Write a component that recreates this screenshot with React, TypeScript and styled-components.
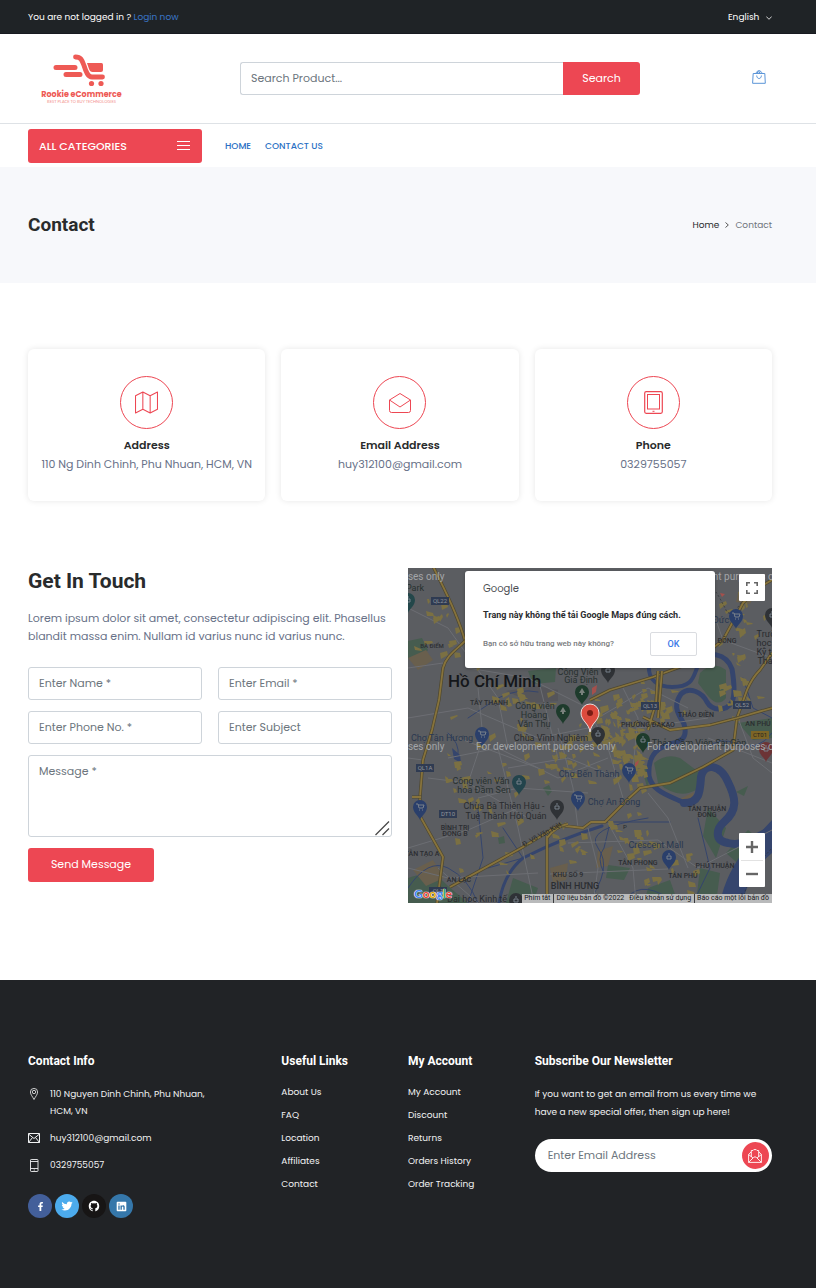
import React from "react";
import styled, { createGlobalStyle } from "styled-components";
import { FaFacebookF } from "react-icons/fa";
import { IoLogoGithub, IoLogoLinkedin, IoLogoTwitter } from "react-icons/io5";

const red = "#ed4753";
const dark = "#212326";
const ink = "#292b2c";
const muted = "#687188";
const line = "#ced4da";
const sans = `Poppins, Inter, "Liberation Sans", sans-serif`;
const heading = `Roboto, "Liberation Sans", sans-serif`;

const GlobalStyle = createGlobalStyle`
  *, *::before, *::after { box-sizing: border-box; }
  body { margin: 0; background: #fff; color: ${ink}; font-family: ${sans}; font-size: 11px; line-height: 18px; }
  h1, h2, h3, p, ul { margin: 0; padding: 0; }
  ul { list-style: none; }
  a { color: inherit; text-decoration: none; }
  button, input, textarea, select { font: inherit; border-radius: 0; }
  button { cursor: pointer; padding: 0; border: 0; }
  svg { display: block; }
`;

const Container = styled.div`
  padding: 0 44px 0 28px;
`;

/* ---------- header ---------- */

const TopBar = styled.div`
  background: #1f2326;
  border-bottom: 1px solid #181a20;
  color: #fff;
  font-size: 9px;
`;

const TopBarRow = styled(Container)`
  display: flex;
  align-items: center;
  justify-content: space-between;
  height: 33px;
`;

const LoginLink = styled.a`
  color: #3a76c8;
`;

const Language = styled.div`
  position: relative;

  svg {
    position: absolute;
    right: 0;
    top: 8px;
    pointer-events: none;
  }
`;

const LanguageSelect = styled.select`
  display: block;
  appearance: none;
  border: 0;
  padding: 0 12px 0 0;
  background: transparent;
  color: #fff;
  line-height: 18px;

  option { color: ${ink}; }
`;

const HeaderMain = styled.div`
  border-bottom: 1px solid #dee2e6;
`;

const HeaderRow = styled(Container)`
  display: flex;
  align-items: center;
  height: 89px;
`;

const LogoLink = styled.a`
  flex: 0 0 212px;
  padding-left: 12px;
`;

const SearchForm = styled.form`
  display: flex;
  flex: 0 1 400px;
  height: 33px;
`;

const SearchInput = styled.input`
  flex: 1;
  min-width: 0;
  padding: 0 10px 2px;
  border: 1px solid ${line};
  border-right: 0;
  border-radius: 3px 0 0 3px;
  background: #fff;
  outline: none;

  &::placeholder { color: #6c757d; opacity: 1; }
`;

const SearchButton = styled.button`
  width: 77px;
  padding-bottom: 2px;
  border-radius: 0 3px 3px 0;
  background: ${red};
  color: #fff;
`;

const CartLink = styled.a`
  margin-left: auto;
  padding: 0 6px 4px 0;
`;

const NavRow = styled(Container)`
  display: flex;
  align-items: center;
  height: 43px;
`;

const CategoriesButton = styled.button`
  display: flex;
  align-items: center;
  justify-content: space-between;
  width: 174px;
  height: 34px;
  margin-right: 23px;
  padding: 0 12px 0 11px;
  border-radius: 3px;
  background: ${red};
  color: #fff;
  font-weight: 500;
  font-size: 11px;
`;

const NavLinks = styled.nav`
  display: flex;
  gap: 14px;
  color: #2a6fc4;
  font-size: 9px;
  font-weight: 500;
`;

/* ---------- page title ---------- */

const TitleBand = styled.div`
  background: #f7f8fb;
`;

const TitleRow = styled(Container)`
  display: flex;
  align-items: center;
  justify-content: space-between;
  height: 116px;
`;

const PageTitle = styled.h1`
  font: 700 19px/24px ${heading};
`;

const Breadcrumb = styled.nav`
  display: flex;
  align-items: center;
  gap: 6px;
  color: #6f757c;
  font-size: 9px;

  a { color: ${ink}; }
`;

/* ---------- contact cards ---------- */

const Cards = styled(Container)`
  display: grid;
  grid-template-columns: repeat(3, 1fr);
  gap: 16px;
  padding-top: 66px;
`;

const Card = styled.section`
  display: flex;
  flex-direction: column;
  align-items: center;
  padding: 27px 8px 28px;
  border-radius: 6px;
  background: #fff;
  box-shadow: 0 0 6px rgba(0, 0, 0, 0.1);
  text-align: center;
`;

const CardIcon = styled.div`
  display: grid;
  place-items: center;
  width: 53px;
  height: 53px;
  margin-bottom: 7px;
  border: 1px solid ${red};
  border-radius: 50%;
  color: ${red};
`;

const CardTitle = styled.h2`
  font-size: 11px;
  font-weight: 600;
  line-height: 19px;
`;

const CardText = styled.p`
  color: ${muted};
`;

/* ---------- form ---------- */

const ContactArea = styled(Container)`
  display: grid;
  grid-template-columns: 1fr 1fr;
  gap: 16px;
  padding-top: 67px;
  padding-bottom: 77px;
`;

const FormTitle = styled.h2`
  margin-bottom: 14px;
  font: 700 21px/27px ${heading};
`;

const Lead = styled.p`
  margin-bottom: 22px;
  color: ${muted};
`;

const Form = styled.form`
  display: grid;
  grid-template-columns: 1fr 1fr;
  gap: 11px 16px;
`;

const Field = styled.input`
  width: 100%;
  height: 33px;
  padding: 0 10px;
  border: 1px solid ${line};
  border-radius: 3px;
  outline: none;

  &::placeholder { color: #6c757d; opacity: 1; }
`;

const MessageBox = styled.div`
  position: relative;
  grid-column: 1 / -1;

  svg {
    position: absolute;
    right: 2px;
    bottom: 1px;
    pointer-events: none;
  }
`;

const MessageField = styled.textarea`
  display: block;
  width: 100%;
  height: 82px;
  padding: 6px 10px;
  border: 1px solid ${line};
  border-radius: 3px;
  resize: none;
  outline: none;

  &::placeholder { color: #6c757d; opacity: 1; }
`;

const SendButton = styled.button`
  width: 126px;
  height: 34px;
  padding-bottom: 2px;
  border-radius: 3px;
  background: ${red};
  color: #fff;
`;

/* ---------- map ---------- */

const MapPanel = styled.div`
  position: relative;
  height: 335px;
  overflow: hidden;
  background: #5b5d61;
  font-family: ${heading};
`;

const MapDialog = styled.div`
  position: absolute;
  top: 3px;
  left: 50%;
  width: 250px;
  margin-left: -125px;
  padding: 9px 18px 12px;
  border-radius: 3px;
  background: #fff;
  box-shadow: 0 1px 3px rgba(0, 0, 0, 0.3);
  font-size: 9px;
`;

const DialogBrand = styled.div`
  color: #4a4d51;
  font: 400 10px/18px Poppins, Lato, sans-serif;
`;

const DialogTitle = styled.p`
  margin: 8px 0;
  font-weight: 700;
  color: #2b2c2f;
  white-space: nowrap;
`;

const DialogFoot = styled.div`
  display: flex;
  align-items: center;
  justify-content: space-between;
  color: #77797c;
  font-size: 8px;
  font-weight: 500;
`;

const OkButton = styled.button`
  width: 47px;
  height: 24px;
  border: 1px solid #dadce0;
  border-radius: 2px;
  background: #fff;
  color: #3b78e7;
  font-size: 9px;
  font-weight: 500;
`;

const FullscreenButton = styled.button`
  position: absolute;
  top: 6px;
  right: 7px;
  display: grid;
  place-items: center;
  width: 26px;
  height: 27px;
  border-radius: 1px;
  background: #fff;
`;

const ZoomGroup = styled.div`
  position: absolute;
  right: 7px;
  bottom: 16px;
  width: 26px;
  padding: 0 2px;
  border-radius: 1px;
  background: #fff;
`;

const ZoomButton = styled.button`
  display: grid;
  place-items: center;
  width: 22px;
  height: 27px;
  background: transparent;

  & + & { border-top: 1px solid #e2e2e2; }
`;

const MapBrand = styled.a`
  position: absolute;
  left: 6px;
  bottom: 0;
  font: 700 12px/18px Lato, sans-serif;
  text-shadow: 0 0 1px #fff, 0 0 1px #fff, 0 0 1px #fff;
`;

const BrandLetter = styled.span<{ $color: string }>`
  color: ${(p) => p.$color};
`;

const Attribution = styled.div`
  position: absolute;
  right: 0;
  bottom: 0;
  display: flex;
  color: #17181a;
  font-size: 7px;
  line-height: 9px;
  white-space: nowrap;
`;

const Credit = styled.a<{ $ruled?: boolean }>`
  padding: 0 3px 0 2px;
  border-left: ${(p) => (p.$ruled ? "1px solid #3b3c3e" : "0")};
  background: #b9babb;
`;

/* ---------- footer ---------- */

const Footer = styled.footer`
  background: ${dark};
  color: #f1f2f3;
  font-size: 9px;
`;

const FooterGrid = styled(Container)`
  display: grid;
  grid-template-columns: repeat(12, 1fr);
  column-gap: 16px;
  padding-top: 72px;
  padding-bottom: 70px;
`;

const FooterColumn = styled.section<{ $span: number }>`
  grid-column: span ${(p) => p.$span};
  min-width: 0;
`;

const FooterTitle = styled.h3`
  margin-bottom: 15px;
  color: #fff;
  font: 700 12px/18px ${heading};
  white-space: nowrap;
`;

const LinkList = styled.ul`
  margin-top: -4px;
  line-height: 23px;
  white-space: nowrap;
`;

const InfoList = styled.ul`
  display: grid;
  gap: 10px;
  margin-bottom: 20px;
  padding-top: 1px;
  line-height: 17px;
`;

const InfoItem = styled.li`
  display: grid;
  grid-template-columns: 12px 1fr;
  column-gap: 10px;
  padding-right: 36px;

  svg { margin-top: 2px; }
`;

const SocialRow = styled.div`
  display: flex;
  gap: 3px;
`;

const Social = styled.a<{ $color: string }>`
  display: grid;
  place-items: center;
  width: 24px;
  height: 24px;
  border-radius: 50%;
  background: ${(p) => p.$color};
  color: #fff;
`;

const NewsForm = styled.form`
  display: flex;
  align-items: center;
  height: 33px;
  margin-top: 18px;
  padding: 0 3px 0 13px;
  border-radius: 17px;
  background: #fff;
  font-size: 11px;
`;

const NewsInput = styled.input`
  flex: 1;
  min-width: 0;
  padding: 0 0 2px;
  border: 0;
  outline: none;
  background: transparent;

  &::placeholder { color: #6c757d; opacity: 1; }
`;

const NewsButton = styled.button`
  display: grid;
  place-items: center;
  width: 27px;
  height: 27px;
  border-radius: 50%;
  background: ${red};
  color: #fff;
`;

/* ---------- drawings ---------- */

const Logo = () => (
  <svg width="84" height="54" viewBox="0 0 84 54" role="img" aria-label="Rookie eCommerce">
    <g fill="none" stroke="#ee5a55" strokeLinecap="round" strokeLinejoin="round">
      <path d="M16 15.500H35M26 22.500H40" strokeWidth="5" />
      <path d="M35.500 5C41 5 42 8 44 13.500C46 20 48 25 52 25H62.500" strokeWidth="4.800" />
    </g>
    <path d="M47 11H61.500Q63 11 63 12.500V18Q63 20 61 20H52.500Q50 20 49 17Z" fill="#ee5a55" />
    <circle cx="51.500" cy="31.500" r="2.600" fill="#ee5a55" />
    <circle cx="61" cy="31.500" r="2.600" fill="#ee5a55" />
    <text x="41.500" y="45" textAnchor="middle" fontFamily="Poppins, Lato, sans-serif" fontWeight="700" fontSize="8" fill="#ee5a55">Rookie eCommerce</text>
    <text x="41.500" y="51" textAnchor="middle" fontFamily="Lato, sans-serif" fontSize="4" fill="#f3938f">BEST PLACE TO BUY TECHNOLOGIES</text>
  </svg>
);

const ChevronDown = () => (
  <svg width="6" height="4" viewBox="0 0 6 4" fill="none" stroke="#fff" strokeWidth=".8"><path d="M.3.500 3 3.300 5.700.500" /></svg>
);

const BagIcon = () => (
  <svg width="14" height="14" viewBox="0 0 14 14" fill="none" stroke="#5b95d8" strokeWidth="1">
    <path d="M1.200 3.500H12.800L13.300 13.300H.6Z" />
    <path d="M3.500 3.200 6 .8H8L10.500 3.200M5 2.800 7.500 1.200M7 2.800 8.500 2" />
    <path d="M4.700 5.500C4.800 9.500 9.300 9.500 9.400 5.500" />
  </svg>
);

const MenuIcon = () => (
  <svg width="13" height="9" viewBox="0 0 13 9" stroke="#fff" strokeWidth="1"><path d="M0 .5H13M0 4.500H13M0 8.500H13" /></svg>
);

const MapIcon = () => (
  <svg width="23" height="23" viewBox="0 0 22 22" fill="none" stroke="currentColor" strokeWidth="1" strokeLinejoin="round">
    <path d="M.5 4.500 7.500 1 14.500 4.500 21.500 1V17.500L14.500 21 7.500 17.500.500 21ZM7.500 1V17.500M14.500 4.500V21" />
  </svg>
);

const OpenMailIcon = () => (
  <svg width="22" height="20" viewBox="0 0 22 20" fill="none" stroke="currentColor" strokeWidth="1" strokeLinejoin="round">
    <path d="M.5 7 11 .5 21.500 7V17.500Q21.500 19.500 19.500 19.500H2.500Q.5 19.500 .5 17.500ZM.5 7 11 14 21.500 7" />
  </svg>
);

const TabletIcon = () => (
  <svg width="19" height="23" viewBox="0 0 19 23" fill="none" stroke="currentColor" strokeWidth="1">
    <rect x=".7" y=".7" width="17.600" height="21.600" rx="1.500" strokeWidth="1.200" />
    <rect x="3.500" y="3.500" width="12" height="14.500" />
    <path d="M8.500 20.300H10.500" />
  </svg>
);

const PinIcon = () => (
  <svg width="12" height="12" viewBox="0 0 12 12" fill="none" stroke="#f1f2f3" strokeWidth=".8">
    <path d="M6 11.500C4.500 8.500 2.400 6.500 2.400 4A3.600 3.600 0 0 1 9.600 4C9.600 6.500 7.500 8.500 6 11.500Z" /><circle cx="6" cy="4" r="1.700" />
  </svg>
);

const MailIcon = () => (
  <svg width="12" height="12" viewBox="0 0 12 12" fill="none" stroke="#f1f2f3" strokeWidth="1">
    <path d="M.5 1.500H11.500V10.500H.5ZM.5 2 6 6.500 11.500 2M.5 10.500 4.500 5.500M11.500 10.500 7.500 5.500" />
  </svg>
);

const PhoneIcon = () => (
  <svg width="12" height="13" viewBox="0 0 12 13" fill="none" stroke="#f1f2f3" strokeWidth=".9">
    <rect x="2.500" y=".5" width="7.500" height="12" rx=".7" /><path d="M2.500 2.500H10M2.500 9.500H10M5.700 11H6.800" />
  </svg>
);

const NewsIcon = () => (
  <svg width="14" height="14" viewBox="0 0 14 14" fill="none" stroke="currentColor" strokeWidth=".9" strokeLinejoin="round">
    <path d="M3 3 .6 5.500V13.400H13.400V5.500L11 3M3.300 8V1.500H5L5.800.600H8.200L9 1.500H10.700V8" />
    <path d="M.6 5.500 5 9M13.400 5.500 9 9M.6 13.400 5.500 8.500Q7 7 8.500 8.500L13.400 13.400" />
  </svg>
);

type Point = [number, number];

/* Built-up blocks: small irregular quads scattered round the district centres. */
const clusters: [number, number, number, number, number][] = [
  [205, 165, 34, 42, 70],
  [222, 190, 20, 36, 40],
  [150, 185, 50, 36, 34],
  [240, 135, 45, 28, 32],
  [222, 265, 36, 30, 20],
  [165, 270, 34, 30, 14],
  [60, 200, 52, 60, 24],
  [110, 130, 60, 35, 20],
  [335, 60, 28, 60, 20],
  [25, 60, 28, 60, 16],
  [255, 300, 40, 35, 18],
  [90, 280, 60, 40, 12],
  [320, 130, 35, 40, 14],
];

const buildBlocks = (): string => {
  let seed = 17;
  const next = () => {
    seed = (seed * 16807) % 2147483647;
    return seed / 2147483647;
  };
  return clusters
    .flatMap(([cx, cy, rx, ry, count]) =>
      Array.from({ length: count }, () => {
        const x = Math.round(cx + (next() + next() - 1) * rx);
        const y = Math.round(cy + (next() + next() - 1) * ry);
        const w = 2 + Math.round(next() * 6);
        const h = 1 + Math.round(next() * 4);
        const skew = Math.round(next() * 6) - 3;
        return `M${x} ${y}l${w} ${skew}l1 ${h}l${-w} ${2 - skew}z`;
      })
    )
    .join("");
};

const blocks = buildBlocks();

const highways = [
  "M24-4C30 10 48 40 57 73C48 82 38 88 35 100L31 132L24 162L15 192L12 229V248L35 289L29 335",
  "M42 319L115 279L140 264Q150 256 158 258L175 260L183 254L197 254L219 232L232 220L262 215L295 199L325 182L329 150L339 122Q344 110 352 102L364 85",
  "M4 229H13M57 73L64 68M182 132L202 122L245 109L272 99L300 84L315 72L335 35L350 20L364 12",
  "M250 103L248 135L240 162M254 103L250 150M235 149L262 162L302 157L329 150L364 140",
  "M139 268V335M139 270Q148 258 160 256",
];

const streets =
  "M0 40L40 60L90 130L100 180M0 150L60 140L130 170L180 160M40 190L90 180L150 210L200 190M60 100L120 110L180 140M20 210L60 215L120 250M70 230L110 220L180 225M90 180L110 260L125 330M0 280L60 262L110 240M30 300L70 335M150 160L165 220L170 260M180 140L200 180L215 230M130 110L150 190M180 260L190 300L185 335M160 275L250 272L290 300L364 262M200 255L225 300L228 335M240 225L260 250L280 300M142 306L260 301M0 300L40 310L130 305M300 170L364 195M330 150L345 190L364 205M215 120L230 150L225 200M0 100L35 95M300 30L315 72L364 90M50 170L130 200M190 150L240 120L280 140M230 160L300 150M0 190L15 192M70 120L75 170L60 215M100 200L160 190L210 210";

const streams =
  "M40 165Q52 175 50 188M60 150L90 130Q110 120 130 124M70 240L75 290L60 335M95 260L115 290L80 300M0 320Q20 290 40 300T70 335M180 335Q205 300 190 280T240 250M215 335Q230 310 260 330M300 180Q310 168 330 176T364 165M335 110L345 140L364 150M290 250L302 300L285 335M183 254H262M202 255L196 280Q188 290 196 305";

const districts: [string, number, number, number][] = [
  ["BÀ ĐIỂM", 24, 80, 6],
  ["TÂY THẠNH", 81, 137, 7],
  ["ĐÔNG", 319, 75, 7],
  ["THẢO ĐIỀN", 288, 149, 7],
  ["PHƯỜNG ĐAKAO", 240, 159, 7],
  ["AN PHÚ", 350, 158, 7],
  ["BÌNH TRỊ", 47, 262, 7],
  ["ĐÔNG B", 47, 268, 7],
  ["TÂN TẠO A", 14, 288, 7],
  ["AN LẠC", 51, 314, 7],
  ["TÂN THUẬN", 299, 243, 7],
  ["ĐÔNG", 299, 249, 7],
  ["TÂN PHONG", 230, 297, 7],
  ["PHÚ THUẬN", 307, 300, 7],
  ["TÂN PHÚ", 275, 310, 7],
  ["KHU SỐ 9", 160, 309, 7],
  ["BÌNH HƯNG", 167, 321, 9],
];

const places: [string, number, number, string][] = [
  ["Công Viên", 170, 107, "#283130"],
  ["Gia Định", 173, 115, "#283130"],
  ["Công viên", 127, 141, "#283130"],
  ["Hoàng", 126, 150, "#283130"],
  ["Văn Thụ", 126, 159, "#283130"],
  ["Chợ Tân Hương", 34, 173, "#2a3850"],
  ["Chùa Vĩnh Nghiêm", 143, 173, "#292b2e"],
  ["Thảo Cầm Viên Sài Gòn", 291, 178, "#283130"],
  ["Chợ Bến Thành", 181, 209, "#2a3850"],
  ["Công viên Văn", 73, 216, "#283130"],
  ["hóa Đầm Sen", 76, 225, "#283130"],
  ["Chợ An Đông", 206, 237, "#2a3850"],
  ["Chùa Bà Thiên Hậu -", 96, 241, "#292b2e"],
  ["Tuệ Thành Hội Quán", 98, 251, "#292b2e"],
  ["Crescent Mall", 248, 280, "#2a3850"],
  ["Đại học Kinh tế", 69, 334, "#292b2e"],
  ["Park", 7, 23, "#283130"],
  ["Trườ", 358, 69, "#292b2e"],
  ["học", 356, 78, "#292b2e"],
  ["Kỹ t", 356, 87, "#292b2e"],
  ["Thà", 357, 96, "#292b2e"],
  ["Đức", 313, 55, "#2a3850"],
];

const shields: [string, number, number][] = [
  ["QL22", 32, 33],
  ["QL13", 242, 138],
  ["QL52", 334, 137],
  ["QL1A", 17, 200],
  ["DT10", 40, 246],
  ["QL1", 30, 323],
];

type Glyph = "tree" | "cart" | "dot";

const pins: [number, number, string, Glyph][] = [
  [174, 124, "#1e3b2c", "tree"],
  [155, 143, "#1e3b2c", "tree"],
  [0, 32, "#23474a", "dot"],
  [74, 166, "#2a3f6b", "cart"],
  [12, 239, "#2a3f6b", "cart"],
  [170, 230, "#2a3f6b", "cart"],
  [221, 202, "#2a3f6b", "cart"],
  [328, 48, "#2a3f6b", "cart"],
  [261, 289, "#2a3f6b", "dot"],
  [200, 102, "#2f3236", "dot"],
  [364, 47, "#2f3236", "dot"],
  [190, 166, "#2f3236", "dot"],
  [149, 239, "#2f3236", "dot"],
  [108, 332, "#2f3236", "dot"],
  [111, 214, "#23444c", "dot"],
  [235, 172, "#1e3b2c", "dot"],
  [358, 181, "#6c3436", "dot"],
];

const glyphPaths: Record<Glyph, string> = {
  tree: "M0-4L3 1H1V3H-1V1H-3Z",
  cart: "M-4-3H-2L-1 1H3L4-2H-2M-1 3H0M2 3H3",
  dot: "M-2-1H2V2H-2ZM-1-3H1",
};

const watermarks: Point[] = [[-103, 12], [68, 12], [239, 12], [-103, 182], [68, 182], [239, 182]];

const CityMap = () => (
  <svg width="100%" height="335" viewBox="0 0 364 335" preserveAspectRatio="xMidYMid slice" fontFamily={heading} aria-hidden="true">
    <rect width="364" height="335" fill="#5b5d61" />
    <path d="M98 123L128 118L150 122V133L125 135Z" fill="#55555a" />
    <g fill="#465c4f">
      <path d="M0 73L14 70L20 82L10 95L0 90ZM120 103L148 100L147 114L125 116ZM292 105Q305 92 318 102V130Q310 140 300 128L290 115Z" />
      <path d="M246 195Q258 185 272 190L292 205L288 222Q270 232 250 215ZM135 220L141 217L144 223L140 228ZM90 270L96 268L97 275L91 276ZM154 188L158 186L159 191Z" />
      <path d="M0 310Q25 300 40 318L60 335H0ZM105 310L130 320L125 335H98ZM232 195L242 200L240 222ZM330 155L364 150V170L345 172ZM318 285L340 262L350 270L335 300ZM300 240L318 260L308 290L295 268ZM200 297L222 300L216 312L198 310ZM240 320L262 312L270 335H236ZM328 224L340 218L336 228ZM292 300L312 305L308 335H288Z" />
    </g>
    <path d="M5 302L25 292L36 310L18 318ZM142 300L160 295L158 312L145 315ZM190 283L205 278L200 298L188 300ZM0 90L18 82L25 92L10 102ZM270 232L286 224L282 238ZM330 25L345 30L342 36L328 34Z" fill="#695f4d" />
    <g fill="none" stroke="#35456d" strokeLinecap="round" strokeLinejoin="round">
      <path d="M241 98C240 112 250 119 264 119C284 119 285 110 289 100" strokeWidth="4" />
      <path d="M289 90C300 84 318 84 324 101C326 113 327 127 324 134C318 144 304 143 299 134C294 124 281 118 273 126C264 139 271 147 276 156C280 170 274 173 262 176C244 181 240 193 241 208C244 224 263 228 276 235" strokeWidth="5" />
      <path d="M276 235C292 235 292 223 293 209C296 194 312 196 320 214C328 230 330 242 316 254C309 260 305 272 320 275C335 279 350 269 366 260" strokeWidth="8" />
      <path d="M194 258Q155 270 115 290Q96 305 91 335" strokeWidth="3" />
      <path d={streams} strokeWidth="1" />
    </g>
    <path d="M364 252V285Q343 302 334 335H312Q318 304 340 278ZM44 180L52 187L53 195L46 191Z" fill="#35456d" />
    <path d={streets} fill="none" stroke="#6c6e73" strokeWidth="1" />
    <path d={blocks} fill="#7b7042" />
    {highways.map((d) => (
      <g key={d} fill="none" strokeLinejoin="round">
        <path d={d} stroke="#4f482f" strokeWidth="3.200" />
        <path d={d} stroke="#87733c" strokeWidth="1.800" />
      </g>
    ))}
    <path d="M184 120l5-3l-1 7l-4 3zM227 195l4-3l-1 4l-3 3zM312 25l5 1l-3 3z" fill="#a4504c" />
    <path d="M308 24Q312 30 318 42T340 22M334 335Q340 305 364 280" fill="none" stroke="#303338" strokeDasharray="2 2" strokeWidth=".8" />
    <text transform="translate(116 279) rotate(-29)" fontSize="7" fill="#25272a">Đ. Võ Văn Kiệt</text>
    <text x="215" y="261" fontSize="6" fill="#25272a">P</text>
    {shields.map(([name, x, y]) => (
      <g key={name}>
        <rect x={x - 9} y={y - 4} width="18" height="8" fill="#2f3b52" />
        <text x={x} y={y + 2} fontSize="6" textAnchor="middle" fill="#8f939b">{name}</text>
      </g>
    ))}
    <rect x="343" y="163" width="18" height="8" fill="#7d6526" />
    <text x="352" y="169" fontSize="6" textAnchor="middle" fill="#25241f">CT01</text>
    {districts.map(([name, x, y, size]) => (
      <text key={`${name}${x}`} x={x} y={y} fontSize={size} fontWeight="500" textAnchor="middle" fill="#2b2d31">{name}</text>
    ))}
    {places.map(([name, x, y, fill]) => (
      <text key={name} x={x} y={y} fontSize="9" textAnchor="middle" fill={fill}>{name}</text>
    ))}
    {pins.map(([x, y, fill, glyph]) => (
      <g key={`${x}-${y}`} transform={`translate(${x} ${y})`}>
        <path d="M0 13C-1 9-7 6-7 0A7 7 0 0 1 7 0C7 6 1 9 0 13Z" fill={fill} />
        <path d={glyphPaths[glyph]} fill={glyph === "tree" ? "#79817c" : "none"} stroke="#79818b" strokeWidth={glyph === "tree" ? 0 : 1} />
      </g>
    ))}
    <text x="40" y="119" fontSize="17" fontWeight="500" fill="#15171a">Hồ Chí Minh</text>
    {watermarks.map(([x, y]) => (
      <text key={`${x}-${y}`} x={x} y={y} fontSize="10" fill="#a3a5a8">For development purposes only</text>
    ))}
    <path d="M182 164C181 155 173 153 173 145A9 9 0 0 1 191 145C191 153 183 155 182 164Z" fill="#dd4b3e" stroke="#fff" strokeWidth=".8" />
    <circle cx="182" cy="145" r="3" fill="#7c1c14" />
  </svg>
);

const googleLetters: [string, string][] = [
  ["G", "#4285f4"], ["o", "#ea4335"], ["o", "#e0a800"], ["g", "#4285f4"], ["l", "#34a853"], ["e", "#ea4335"],
];

const cards = [
  { title: "Address", text: "110 Ng Dinh Chinh, Phu Nhuan, HCM, VN", icon: <MapIcon /> },
  { title: "Email Address", text: "huy312100@gmail.com", icon: <OpenMailIcon /> },
  { title: "Phone", text: "0329755057", icon: <TabletIcon /> },
];

const linkColumns = [
  { title: "Useful Links", links: ["About Us", "FAQ", "Location", "Affiliates", "Contact"] },
  { title: "My Account", links: ["My Account", "Discount", "Returns", "Orders History", "Order Tracking"] },
];

const keep = (e: React.FormEvent) => e.preventDefault();

export default function App() {
  return (
    <>
      <GlobalStyle />
      <header>
        <TopBar>
          <TopBarRow>
            <span>You are not logged in ? <LoginLink href="#login">Login now</LoginLink></span>
            <Language>
              <LanguageSelect aria-label="Language"><option>English</option></LanguageSelect>
              <ChevronDown />
            </Language>
          </TopBarRow>
        </TopBar>
        <HeaderMain>
          <HeaderRow>
            <LogoLink href="#home"><Logo /></LogoLink>
            <SearchForm onSubmit={keep}>
              <SearchInput type="text" aria-label="Search Product" placeholder="Search Product..." />
              <SearchButton type="submit">Search</SearchButton>
            </SearchForm>
            <CartLink href="#cart" aria-label="Cart"><BagIcon /></CartLink>
          </HeaderRow>
        </HeaderMain>
        <NavRow>
          <CategoriesButton type="button">ALL CATEGORIES<MenuIcon /></CategoriesButton>
          <NavLinks>
            <a href="#home">HOME</a>
            <a href="#contact">CONTACT US</a>
          </NavLinks>
        </NavRow>
      </header>

      <main>
        <TitleBand>
          <TitleRow>
            <PageTitle>Contact</PageTitle>
            <Breadcrumb aria-label="Breadcrumb">
              <a href="#home">Home</a>
              <svg width="4" height="6" viewBox="0 0 4 6" fill="none" stroke="#555"><path d="M.5.500 3.300 3 .5 5.500" /></svg>
              <span>Contact</span>
            </Breadcrumb>
          </TitleRow>
        </TitleBand>

        <Cards>
          {cards.map((card) => (
            <Card key={card.title}>
              <CardIcon>{card.icon}</CardIcon>
              <CardTitle>{card.title}</CardTitle>
              <CardText>{card.text}</CardText>
            </Card>
          ))}
        </Cards>

        <ContactArea>
          <section>
            <FormTitle>Get In Touch</FormTitle>
            <Lead>Lorem ipsum dolor sit amet, consectetur adipiscing elit. Phasellus blandit massa enim. Nullam id varius nunc id varius nunc.</Lead>
            <Form onSubmit={keep}>
              <Field type="text" aria-label="Name" placeholder="Enter Name *" />
              <Field type="email" aria-label="Email" placeholder="Enter Email *" />
              <Field type="tel" aria-label="Phone number" placeholder="Enter Phone No. *" />
              <Field type="text" aria-label="Subject" placeholder="Enter Subject" />
              <MessageBox>
                <MessageField aria-label="Message" placeholder="Message *" />
                <svg width="15" height="15" viewBox="0 0 15 15" stroke="#4a4a4a" strokeWidth="1.300"><path d="M.5 14 14 .5M7.500 14 14 7.500" /></svg>
              </MessageBox>
              <SendButton type="submit">Send Message</SendButton>
            </Form>
          </section>

          <MapPanel>
            <CityMap />
            <MapDialog role="dialog" aria-label="Google Maps">
              <DialogBrand>Google</DialogBrand>
              <DialogTitle>Trang này không thể tải Google Maps đúng cách.</DialogTitle>
              <DialogFoot>
                <a href="#owner">Bạn có sở hữu trang web này không?</a>
                <OkButton type="button">OK</OkButton>
              </DialogFoot>
            </MapDialog>
            <FullscreenButton type="button" aria-label="Fullscreen">
              <svg width="12" height="12" viewBox="0 0 12 12" fill="none" stroke="#666" strokeWidth="1.600"><path d="M.8 4V.8H4M8 .8H11.200V4M11.200 8V11.200H8M4 11.200H.8V8" /></svg>
            </FullscreenButton>
            <ZoomGroup>
              <ZoomButton type="button" aria-label="Zoom in">
                <svg width="12" height="12" viewBox="0 0 12 12" stroke="#666" strokeWidth="2.400"><path d="M0 6H12M6 0V12" /></svg>
              </ZoomButton>
              <ZoomButton type="button" aria-label="Zoom out">
                <svg width="12" height="12" viewBox="0 0 12 12" stroke="#666" strokeWidth="2.400"><path d="M0 6H12" /></svg>
              </ZoomButton>
            </ZoomGroup>
            <MapBrand href="#google">
              {googleLetters.map(([letter, color], i) => <BrandLetter key={i} $color={color}>{letter}</BrandLetter>)}
            </MapBrand>
            <Attribution>
              <Credit href="#keys">Phím tắt</Credit>
              <Credit href="#data" $ruled>Dữ liệu bản đồ ©2022</Credit>
              <Credit href="#terms">Điều khoản sử dụng</Credit>
              <Credit href="#report" $ruled>Báo cáo một lỗi bản đồ</Credit>
            </Attribution>
          </MapPanel>
        </ContactArea>
      </main>

      <Footer>
        <FooterGrid>
          <FooterColumn $span={4}>
            <FooterTitle>Contact Info</FooterTitle>
            <InfoList>
              <InfoItem><PinIcon /><span>110 Nguyen Dinh Chinh, Phu Nhuan, HCM, VN</span></InfoItem>
              <InfoItem><MailIcon /><a href="mailto:huy312100@gmail.com">huy312100@gmail.com</a></InfoItem>
              <InfoItem><PhoneIcon /><span>0329755057</span></InfoItem>
            </InfoList>
            <SocialRow>
              <Social href="#facebook" $color="#435f9a" aria-label="Facebook"><FaFacebookF size={9} /></Social>
              <Social href="#twitter" $color="#4cabed" aria-label="Twitter"><IoLogoTwitter size={12} /></Social>
              <Social href="#github" $color="#171515" aria-label="GitHub"><IoLogoGithub size={12} /></Social>
              <Social href="#linkedin" $color="#3577aa" aria-label="LinkedIn"><IoLogoLinkedin size={11} /></Social>
            </SocialRow>
          </FooterColumn>
          {linkColumns.map((column) => (
            <FooterColumn key={column.title} $span={2}>
              <FooterTitle>{column.title}</FooterTitle>
              <LinkList>
                {column.links.map((name) => <li key={name}><a href="#link">{name}</a></li>)}
              </LinkList>
            </FooterColumn>
          ))}
          <FooterColumn $span={4}>
            <FooterTitle>Subscribe Our Newsletter</FooterTitle>
            <p>If you want to get an email from us every time we have a new special offer, then sign up here!</p>
            <NewsForm onSubmit={keep}>
              <NewsInput type="email" aria-label="Email Address" placeholder="Enter Email Address" />
              <NewsButton type="submit" aria-label="Subscribe"><NewsIcon /></NewsButton>
            </NewsForm>
          </FooterColumn>
        </FooterGrid>
      </Footer>
    </>
  );
}
